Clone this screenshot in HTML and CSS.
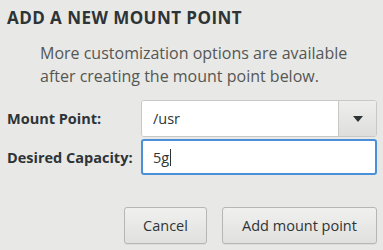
FILE: index.html
```html
<!DOCTYPE html>
<html lang="en">
<head>
<meta charset="UTF-8">
<title>Add a new mount point</title>
<link rel="stylesheet" href="styles.css">
</head>
<body>
<div class="dialog">
    <h1>ADD A NEW MOUNT POINT</h1>
    <p class="note">More customization options are available<br>after creating the mount point below.</p>

    <div class="form">
        <label for="mountPoint">Mount Point:</label>
        <div class="combo">
            <input id="mountPoint" type="text" value="/usr">
            <button class="drop" type="button">
                <svg width="10" height="6" viewBox="0 0 10 6"><path d="M0 0h10L5 6z" fill="#2e3436"/></svg>
            </button>
        </div>

        <label>Desired Capacity:</label>
        <div class="entry focus">5g<span class="caret"></span></div>
    </div>

    <div class="actions">
        <button class="btn" type="button">Cancel</button>
        <button class="btn" type="button">Add mount point</button>
    </div>
</div>
</body>
</html>
```

FILE: styles.css
```css
body {margin:0;padding:0;background:#e8e8e7;color:#2e3436;font-family:"Open Sans","DejaVu Sans",sans-serif;}
.dialog {width:383px;height:250px;padding:0 6px 0 7px;box-sizing:border-box;}
h1 {margin:0;padding-top:8px;font-size:17px;font-weight:bold;line-height:20px;letter-spacing:0.45px;color:#2e3436;}
.note {margin:14px 0 0 33px;font-size:16px;line-height:23px;color:#555753;}
.form {display:grid;grid-template-columns:134px 236px;row-gap:2px;align-items:center;margin-top:12px;}
label {font-size:14.5px;font-weight:bold;color:#2e3436;}
.combo {display:flex;height:37px;border:1px solid #c8c8c6;border-radius:3px;background:#fff;box-sizing:border-box;overflow:hidden;}
.combo input {flex:1;min-width:0;border:none;outline:none;padding:0 11px;font:inherit;font-size:14.5px;color:#2e3436;background:#fff;}
.drop {width:38px;border:none;border-left:1px solid #c8c8c6;background:linear-gradient(#eeeeec,#dededc);display:flex;align-items:center;justify-content:center;padding:0;}
.entry {height:36px;box-sizing:border-box;border:2px solid #4a90d9;border-radius:3px;padding:0 10px;font-size:14.5px;color:#2e3436;background:#fff;display:flex;align-items:center;}
.caret {display:inline-block;width:1px;height:17px;background:#2e3436;margin-left:1px;}
.actions {display:flex;justify-content:flex-end;gap:15px;margin-top:32px;}
.btn {height:37px;border:1px solid #b6b6b3;border-radius:3px;background:linear-gradient(#f0f0ee,#e0e0de);font:inherit;font-size:14.5px;color:#2e3436;padding:0 14px;box-shadow:0 1px 0 rgba(0,0,0,0.05);}
.btn:first-child {width:83px;}
.btn:last-child {width:155px;}
```
